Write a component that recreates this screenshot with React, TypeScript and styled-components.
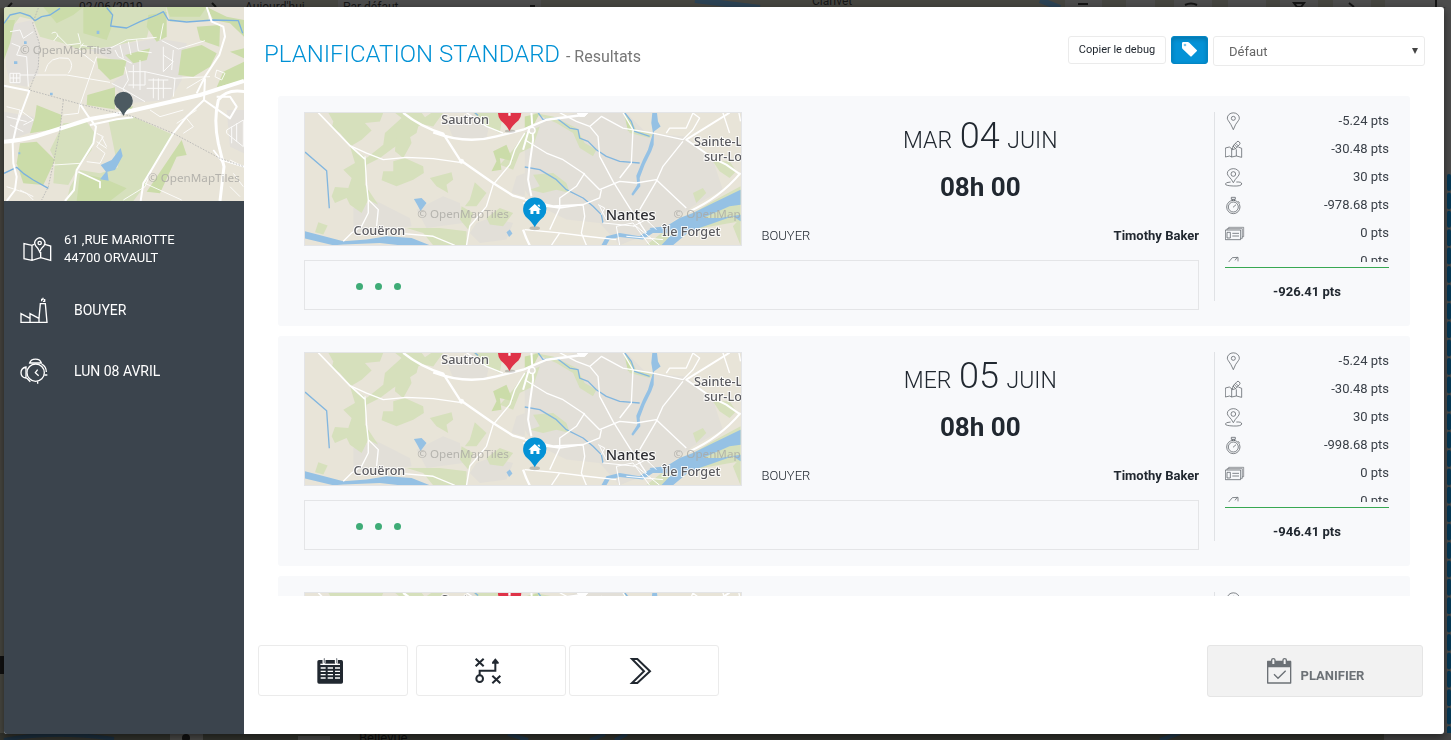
import React from "react";
import styled, { createGlobalStyle, css } from "styled-components";

const GlobalStyle = createGlobalStyle`
  * { box-sizing: border-box; }
  body {
    margin: 0;
    background: #4b4b49;
    color: #212830;
    font-family: Roboto, "Liberation Sans", sans-serif;
    font-size: 13px;
    line-height: 18px;
  }
  button, select { font-family: inherit; }
`;

/* ---------- page behind the dialog ---------- */

const Behind = styled.div`
  position: fixed;
  inset: 0;
  overflow: hidden;
  background: #3f403b;
  color: #141414;
`;

const BehindMap = styled.svg`
  display: block;
  width: 100%;
  height: 100%;
`;

const Page = styled.div`
  position: relative;
  min-height: 100vh;
  display: flex;
  padding: 7px 7px 6px 4px;
`;

const Dialog = styled.section`
  flex: 1;
  min-width: 0;
  display: flex;
  background: #fff;
  border-radius: 3px;
  box-shadow: 0 3px 10px rgba(0, 0, 0, 0.5);
  overflow: hidden;
`;

/* ---------- sidebar ---------- */

const Sidebar = styled.aside`
  flex: 0 0 240px;
  background: #3b444d;
  color: #fff;
`;

const SideMap = styled.svg`
  display: block;
  width: 100%;
  height: 194px;
`;

const InfoList = styled.ul`
  display: flex;
  flex-direction: column;
  gap: 1px;
  list-style: none;
  margin: 0;
  padding: 18px 16px 0;
`;

const InfoItem = styled.li<{ $wide?: boolean }>`
  display: flex;
  align-items: center;
  height: 60px;
  gap: ${(p) => (p.$wide ? 26 : 13)}px;
  padding-left: ${(p) => (p.$wide ? 0 : 3)}px;
  font-size: ${(p) => (p.$wide ? 14 : 13)}px;
`;

const InfoIcon = styled.svg`
  flex: none;
  width: 28px;
  height: 28px;
  overflow: visible;
  fill: none;
  stroke: #fff;
  stroke-width: 4;
`;

/* ---------- main panel ---------- */

const Main = styled.main`
  flex: 1;
  min-width: 0;
  display: flex;
  flex-direction: column;
`;

const Header = styled.header`
  display: flex;
  justify-content: space-between;
  align-items: flex-start;
  height: 89px;
  padding: 29px 19px 0 20px;
`;

const Title = styled.h1`
  margin: 0;
  font-size: 24px;
  line-height: 36px;
  font-weight: 300;
  color: #0091d5;
`;

const Subtitle = styled.small`
  font-size: 16px;
  font-weight: 400;
  color: #777;
`;

const Tools = styled.div`
  display: flex;
  align-items: flex-start;
  gap: 5px;
`;

const ToolButton = styled.button<{ $active?: boolean }>`
  display: flex;
  align-items: center;
  justify-content: center;
  height: 28px;
  width: ${(p) => (p.$active ? 37 : 98)}px;
  padding: 0 0 2px;
  border: 1px solid #ebebeb;
  border-radius: 3px;
  background: #fff;
  color: #212830;
  font-size: 11px;
  ${(p) =>
    p.$active &&
    css`
      border-color: #0486c4;
      background: #0492d6;
      color: #fff;
      box-shadow: inset 0 2px 4px rgba(0, 0, 0, 0.2);
    `}
`;

const SelectWrap = styled.div`
  display: grid;
  align-items: center;
  width: 212px;
  > * { grid-area: 1 / 1; }
`;

const Select = styled.select`
  appearance: none;
  width: 100%;
  height: 30px;
  padding: 0 15px;
  border: 1px solid #ebebeb;
  border-radius: 3px;
  background: #fff;
  color: #666;
  font-size: 13px;
`;

const SelectArrow = styled.svg`
  justify-self: end;
  width: 6px;
  height: 6px;
  margin-right: 7px;
  pointer-events: none;
  fill: #444;
`;

const Results = styled.div`
  display: flex;
  flex-direction: column;
  gap: 10px;
  height: calc(100vh - 240px);
  margin: 0 34px;
  overflow: hidden;
`;

const Card = styled.article`
  flex: none;
  display: flex;
  height: 230px;
  padding: 16px 21px 16px 26px;
  border-radius: 3px;
  background: #f8f9fb;
`;

const CardBody = styled.div`
  flex: 1;
  min-width: 0;
  margin-right: 15px;
`;

const CardTop = styled.div`
  display: flex;
  height: 134px;
  margin-bottom: 14px;
`;

const CardMap = styled.svg`
  flex: none;
  width: calc(49% - 1px);
  height: 134px;
  border: 1px solid #e4e5e7;
`;

const Slot = styled.div`
  flex: 1;
  display: flex;
  flex-direction: column;
  padding-left: 20px;
  text-align: center;
`;

const SlotDate = styled.div`
  height: 48px;
  line-height: 48px;
  font-size: 23px;
  font-weight: 300;
`;

const SlotDay = styled.span`
  margin: 0 2px;
  font-size: 36px;
`;

const SlotTime = styled.div`
  margin-top: 10px;
  font-size: 26px;
  line-height: 34px;
  font-weight: 700;
`;

const SlotPeople = styled.div`
  display: flex;
  justify-content: space-between;
  margin-top: auto;
  padding-bottom: 1px;
  font-weight: 300;
`;

const Technician = styled.strong`
  font-weight: 700;
`;

const Steps = styled.div`
  display: flex;
  align-items: center;
  gap: 12px;
  height: 50px;
  padding: 2px 0 0 51px;
  border: 1px solid #e4e5e7;
`;

const Dot = styled.span`
  width: 7px;
  height: 7px;
  border-radius: 50%;
  background: #3fac77;
`;

const Scores = styled.div`
  flex: 0 0 175px;
  height: 189px;
  padding-left: 10px;
  border-left: 1px solid #e0e2e5;
`;

const ScoreList = styled.ul`
  list-style: none;
  height: 150px;
  margin: 0 0 5px;
  padding: 0;
  overflow: hidden;
`;

const ScoreRow = styled.li`
  display: flex;
  justify-content: space-between;
  height: 28px;
  color: #3a4048;
`;

const ScoreIcon = styled.svg`
  width: 20px;
  height: 20px;
  fill: none;
  stroke: #555a60;
  stroke-width: 2.2;
`;

const Total = styled.div`
  padding-top: 15px;
  border-top: 1px solid #38a852;
  text-align: center;
  font-weight: 700;
`;

/* ---------- footer ---------- */

const Footer = styled.footer`
  display: flex;
  align-items: flex-start;
  margin-top: auto;
  padding: 0 21px 37px 14px;
`;

const ActionButton = styled.button<{ $gap: number }>`
  display: flex;
  align-items: center;
  justify-content: center;
  width: 150px;
  height: 51px;
  margin-right: ${(p) => p.$gap}px;
  padding: 0 6px 0 0;
  border: 1px solid #ebebeb;
  border-radius: 3px;
  background: #fff;
`;

const ActionIcon = styled.svg`
  width: 26px;
  height: 26px;
  overflow: visible;
  fill: none;
  stroke: #212830;
`;

const PlanButton = styled.button`
  display: flex;
  align-items: flex-end;
  justify-content: center;
  gap: 9px;
  width: 216px;
  height: 52px;
  margin-left: auto;
  padding: 0 0 11px;
  border: 1px solid #e5e5e5;
  border-radius: 3px;
  background: #f2f2f2;
  color: #6c7176;
  font-size: 13px;
  font-weight: 700;
  line-height: 18px;
`;

const PlanIcon = styled.svg`
  width: 26px;
  height: 26px;
  margin-bottom: 1px;
  fill: none;
  stroke: #6c7176;
  stroke-width: 4;
`;

/* ---------- drawings ---------- */

const BackgroundScene = () => (
  <BehindMap viewBox="0 0 1451 740" preserveAspectRatio="none" aria-hidden="true">
    <rect width="1451" height="8" fill="#464641" />
    <rect width="292" height="8" fill="#4c4c4c" />
    <rect x="338" width="203" height="8" fill="#4c4c4c" />
    <path d="M695 0 L760 8 M1040 0 L1060 8" stroke="#2c4355" strokeWidth="6" />
    <g fill="#4d4d4d">
      <path d="M1065 0h37v8h-37zM1126 0h29v8h-29zM1174 0h38v8h-38zM1228 0h38v8h-38zM1280 0h38v8h-38zM1333 0h38v8h-38zM1385 0h66v8h-66z" />
    </g>
    <path d="M12 3l-4 4M212 3l4 4M1078 4h10M1185 5q6-3 12 0M1294 3h10l-3 4h-4zM1349 3l5 4M1436 0v7M1444 8q6 4 7 14" fill="none" stroke="#151515" strokeWidth="2" />
    <rect x="530" y="5" width="5" height="2" fill="#151515" />
    <g fontSize="12" fill="#171717">
      <text x="79" y="11">02/06/2019</text>
      <text x="245" y="11">Aujourd'hui</text>
      <text x="343" y="11">Par défaut</text>
      <text x="812" y="5">Clarivet</text>
    </g>
    <rect y="8" width="5" height="732" fill="#484841" />
    <rect y="200" width="5" height="270" fill="#46443f" />
    <rect y="656" width="5" height="18" fill="#111" />
    <rect x="1443" y="8" width="8" height="732" fill="#4c4c4c" />
    {Array.from({ length: 31 }, (_, i) => (
      <rect key={i} x="1447" y={174 + i * 18.4} width="4" height="17" rx="2" fill="#063a58" />
    ))}
    <rect y="733" width="1384" height="7" fill="#32332d" />
    <rect x="1384" y="733" width="67" height="7" fill="#444" />
    <path d="M4 740q50-10 110-1" fill="none" stroke="#1c3040" strokeWidth="4" />
    <path d="M170 733h33v7h-33zM298 736h32v4h-32z" fill="#4a4a48" />
    <circle cx="186" cy="738" r="4" fill="#111" />
    <path d="M508 734l20 6M615 740l12-6M1160 740l20-7M590 740l15-6" stroke="#22384a" strokeWidth="4" />
    <text x="359" y="742" fontSize="13" fill="#0d0d0d">Bellevue</text>
  </BehindMap>
);

const OrvaultMap = () => (
  <SideMap viewBox="12 21 720 582" preserveAspectRatio="xMidYMid slice" role="img" aria-label="Orvault">
    <rect x="12" y="21" width="720" height="582" fill="#e8e4d8" />
    <g fill="#e2dfda">
      <path d="M30 75L95 60 120 130 115 220 80 260 30 250 18 200 20 120Z" />
      <path d="M270 150L470 115 560 130 545 240 510 300 380 310 335 250 385 215 340 180Z" />
      <path d="M12 335L100 350 110 390 30 420 12 420Z" />
      <path d="M680 330L732 330 732 460 690 440Z" />
    </g>
    <g fill="#d6e0bd">
      <path d="M12 21H500L495 55 450 75 440 115 330 140 240 150 190 130 120 110 100 60 60 50 30 90 12 160Z" />
      <path d="M325 360L400 350 520 405 430 550 360 530 345 460Z" />
      <path d="M190 370L260 365 285 400 275 450 230 510 205 555 160 550 165 480 150 450Z" />
      <path d="M210 560L240 510 300 520 360 500 440 550 400 603H200Z" />
      <path d="M500 21H625V60L510 65Z" />
    </g>
    <g fill="#cbdca9">
      <path d="M250 21H335V80L320 120 250 100Z" />
      <path d="M12 60L45 60 30 130 12 180Z" />
      <path d="M130 21L250 21 220 45 170 70Z" />
      <path d="M445 45L500 35 500 110 470 125 440 80Z" />
      <path d="M500 21H620L600 50H510Z" />
      <path d="M590 80L660 75 658 140 600 120Z" />
      <path d="M545 150L605 135 650 160 630 200 580 230 535 225Z" />
      <path d="M290 175L380 180 370 225 330 240 295 205Z" />
      <path d="M262 285L345 262 345 330 400 318 390 335 260 315Z" />
      <path d="M375 165L450 145 440 180 400 190Z" />
      <path d="M110 315L185 345 180 385 90 400 105 350Z" />
      <path d="M60 430L110 425 165 480 130 555 70 550 50 490Z" />
      <path d="M440 575L545 420 560 465 530 470 480 580Z" />
      <path d="M240 520L310 535 380 565 330 603H230Z" />
      <path d="M620 21L680 50 732 60V110L690 70 640 60Z" />
      <path d="M670 215L732 185V240L650 262Z" />
      <path d="M690 155L732 145V175Z" />
    </g>
    <g fill="none" stroke="#7ab1df" strokeWidth="4" strokeLinejoin="round">
      <path d="M12 70L30 45 60 38 90 48 105 62 125 50 150 45 180 25M320 23L338 45 332 78 380 84 420 65 470 45 490 35 505 60 560 66 640 60 715 62 728 100" />
      <path d="M12 520L50 502 70 520 100 540 145 565" />
    </g>
    <g fill="#93c0e4">
      <path d="M362 444L368 468 345 510 322 515 326 542 300 538 318 515 302 495 335 480Z" />
      <path d="M290 92h8v10h-8zM72 124h8v8h-8zM42 184h10v8h-10zM150 278h8v8h-8zM55 457h6v6h-6z" />
    </g>
    <g fill="none" stroke="#fff" strokeWidth="3" opacity=".85">
      <path d="M30 95l30-5 10 25 30-20M35 130l25 10-10 25 30 5 5 90M30 220h30v28h-30zM40 220v28M50 220v28M30 234h30" />
      <path d="M155 100q15-10 18 8l-12 15M172 105l30 30 40-5-8-30M240 135l60 10M250 130l-15 20 50 40M290 170l-50 145M60 225l140 0 130 22" />
      <path d="M135 215q10-50 70-40 20 20 0 45M330 145l50-25 90-8M345 150l10 20 40 20M360 135l10 40M385 125l8 40M410 118l5 35 40 5M480 120l10-50M485 122l50 25 80-25M490 140v75l30-30-30-20M520 150l-5 60" />
      <path d="M375 200l10 40-15 25 10 40M385 215h50v40h-50M400 195v70M420 180v90M435 215l90 20-5 55M445 240h60M440 265h75M460 235v60M475 235v65M490 240v55M335 250l40 20 60 35M520 235l110-5" />
      <path d="M20 320l40 10-10 40M20 350l60 15M60 330l40 30-30 15M30 375l40 20M190 345l45-5 5-30M160 495l80-5M290 400l20 10-20 30 25 20-15 30-40-5M320 445l-30-20M305 410l15 30" />
      <path d="M370 600l65-40 20-50M435 550l110 50M450 330l30 20 70-20M530 370l60-40M560 355l20 25-30 20M650 210l25 10-10 20-20-10zM560 265l50-30M20 560l60 20 20 20M60 570l40 20M680 390l50-30v80l-50-40zM695 380v50M710 370v55M690 480l40 20M700 520l30 40M690 560l30 30" />
    </g>
    <g fill="none" stroke="#fff" strokeLinejoin="round">
      <path d="M12 425Q60 422 110 408L270 357 340 345 600 285 732 243" strokeWidth="12" />
      <path d="M240 312L262 345 288 380 280 430 230 510 222 570 195 603M270 375L350 358 400 352M88 273L50 375 38 430 40 490 50 530 45 570 20 603M12 257L90 273M620 21L635 65 670 80 675 110 658 165 615 230 590 280M615 235L612 300 560 350 520 400 460 500 430 550 422 603M612 300L690 355 710 320 690 290 650 290" strokeWidth="6" />
      <path d="M735 275Q680 265 655 300 640 360 655 430L672 500 660 603" strokeWidth="9" />
      <path d="M665 480L732 500M670 490L640 450M300 565V545L235 515" strokeWidth="5" />
    </g>
    <g fill="none" stroke="#b5b5b3" strokeWidth="2.5" strokeDasharray="5 4">
      <path d="M115 24L98 70 118 130 115 200 88 270 250 315 400 350 520 400 660 475 732 500M190 300L180 390 160 490 145 560 125 600" />
    </g>
    <g fontFamily="'Noto Sans', sans-serif" fontSize="35" fill="#aaa9a4" fillOpacity=".85">
      <text x="60" y="161">© OpenMapTiles</text>
      <text x="444" y="545">© OpenMapTiles</text>
    </g>
    <path d="M370 348Q362 330 350 322A28 28 0 1 1 391 322Q378 330 370 348Z" fill="#4c5a61" />
  </SideMap>
);

const NantesMap = () => (
  <CardMap viewBox="15 69 1308 398" preserveAspectRatio="xMidYMid slice" role="img" aria-label="Nantes">
    <rect x="0" y="60" width="1340" height="420" fill="#e8e4d8" />
    <g fill="#e2dfd8">
      <path d="M675 130L720 100 830 69 980 69 1040 130 1160 140 1240 210 1270 300 1180 350 1100 410 960 467 900 400 800 390 700 340 675 300Z" />
      <path d="M160 355L230 335 330 385 335 410 160 430Z" />
      <path d="M440 95L520 69 570 100 560 145 460 145Z" />
      <path d="M350 360L430 320 480 340 490 400 380 415Z" />
      <path d="M530 400L570 385 640 400 620 450 540 460 510 430ZM650 260L675 250V320L635 310Z" />
    </g>
    <g fill="#d6e0bc">
      <path d="M85 69H250L240 95 195 100 215 122 185 150 152 170 120 130 95 115 100 95Z" />
      <path d="M150 170L200 205 250 165 255 130 305 85 285 69H365L385 95 355 110 350 130 280 175 240 205 200 225 195 285 235 345 205 330 185 370 150 345 140 325 105 340 95 320 105 292 145 295 155 265 130 240 165 220Z" />
      <path d="M280 215L315 205 370 230 372 250 340 270 290 290 245 272 250 245 280 245Z" />
      <path d="M395 69H430L400 110 350 100ZM290 130L325 120 335 160 310 205 285 185Z" />
      <path d="M390 265L455 248 460 270 440 285 445 310 410 290ZM525 278L560 310 530 350 495 350 510 330ZM485 350L520 370 505 420 480 390Z" />
      <path d="M55 398L83 408 70 435 45 428ZM320 415L420 415 500 425 500 467H400L370 430ZM520 69H610L600 130 560 110Z" />
      <path d="M640 180L675 130 720 110 700 170 660 190 640 240 600 225ZM560 385L600 355 640 370 610 410 570 405Z" />
      <path d="M690 300L720 290 700 255 760 250 800 280 810 310 770 300 730 310ZM700 69L760 80 830 115 855 160 890 180 880 200 840 175 820 130 770 100Z" />
      <path d="M970 69L990 85 1010 120 1060 135 1050 145 990 130ZM1180 310L1210 295 1220 310 1190 340ZM1230 340L1323 290V395L1180 420 1120 440 1100 467H1040L1080 435Z" />
      <path d="M1240 215L1290 215 1310 245 1290 265 1260 245ZM1323 385L1300 410 1323 467Z" />
    </g>
    <g fill="#cbdca9">
      <path d="M580 185L620 165 640 215 600 205 605 240 575 245 590 215ZM675 80L720 70 705 100 675 115ZM975 75L1000 105 985 125Z" />
    </g>
    <g fill="#95c1e4">
      <path d="M15 425L130 455 200 450 260 440 335 445 390 467H300L240 460 130 465 100 467 15 447Z" />
      <path d="M342 328L365 325 380 340 362 364 352 345ZM620 428L630 420 638 432 628 442Z" />
      <path d="M1323 300L1230 345 1180 370 1140 385 1100 410 1050 415 1060 430 1120 430 1085 467H1120L1170 425 1230 405 1300 380 1323 395V375L1260 385 1210 385 1290 350 1323 345Z" />
      <path d="M1058 69H1072L1075 95 1083 110 1063 125 1062 165 1055 185 1035 225 1020 265 1022 290 1000 318 995 314 1013 285 1010 258 1030 210 1045 180 1060 130 1055 100Z" />
      <path d="M905 467L920 440 960 430 1020 440 1050 420 1110 410 1100 425 1060 430 1030 450 960 442 930 450 920 467Z" />
    </g>
    <g fill="none" stroke="#82b6df" strokeWidth="4" strokeLinejoin="round">
      <path d="M15 187L80 243 88 356M525 69l10 8M715 69L730 90 770 85 810 115 835 120 840 145 865 155 890 180 920 200 960 215 1020 220M975 69L995 95 1005 125 1050 140M675 232L720 240 770 270 800 300 850 325 880 350 905 375 910 400" />
    </g>
    <g fill="none" stroke="#fff" strokeWidth="4" strokeLinejoin="round">
      <path d="M150 168L200 190 250 210 320 203 400 207 480 218M195 200L200 285 205 330 235 360 230 410M205 330L205 370 185 410 155 430 130 455M310 432L400 440 465 467M500 467L510 410 560 350 580 285 630 225 645 180 675 130M500 69L560 110 610 130" />
      <path d="M780 69L830 95 870 110 905 80 970 115 1060 130 1150 150M870 110L895 140 900 200 940 275 990 355 1040 430M675 150L740 190 790 210 850 250 900 300 960 275 1010 280 1070 270 1160 355M970 69L1000 120 995 220 960 265M1150 155L1090 230 1070 275 1020 360M1100 130L1110 115 1160 115 1180 70 1200 85 1180 120 1150 150" />
      <path d="M780 355L850 345 900 325 905 300M855 250L830 290 780 325 780 355 750 420M850 345L855 380 845 430 860 467M670 340L780 355M675 420L780 430 860 440 950 450M780 430L755 467M1290 130L1270 69M1323 95L1318 69" />
      <path d="M910 400L1010 410 1080 467M960 467L950 410 1000 400 1050 467M1000 410L1040 390 1070 420M980 440L1090 450M1010 360L1050 400M900 350L920 390M895 345l20 10-10 20" strokeWidth="3" />
    </g>
    <g fill="none" stroke="#fff" strokeLinejoin="round">
      <path d="M55 69L150 168 195 208" strokeWidth="5" />
      <path d="M310 69Q360 110 430 132L480 210 580 280 640 318 675 328M400 128Q500 165 590 140L670 120 740 90 855 75" strokeWidth="7" />
      <path d="M695 69L700 150 690 220 685 270 695 320M675 330L760 350 850 345M690 110L670 180M1323 255L1280 225 1240 205 1160 150 1290 69M1323 250Q1260 325 1170 365" strokeWidth="6" />
      <path d="M832 69H865L855 80H840Z" fill="#fff" strokeWidth="3" />
      <circle cx="485" cy="215" r="7" fill="#fff" />
      <circle cx="697" cy="122" r="9" fill="#e2dfd8" strokeWidth="4" />
      <path d="M670 420Q680 450 690 467" strokeWidth="7" />
    </g>
    <g fontFamily="'Noto Sans', sans-serif" fontWeight="500" paintOrder="stroke" stroke="#fff" strokeOpacity=".85" strokeWidth="6" fill="#5c5c60">
      <g fontSize="38">
        <text x="424" y="102">Sautron</text>
        <text x="161" y="435">Couëron</text>
        <text x="1183" y="168">Sainte-L</text>
        <text x="1213" y="215">sur-Lo</text>
        <text x="1088" y="440">Île Forget</text>
      </g>
      <text x="918" y="392" fontSize="44" fill="#2e2e32">Nantes</text>
    </g>
    <g fontFamily="'Noto Sans', sans-serif" fontSize="35" fill="#aaa9a4" fillOpacity=".8">
      <text x="352" y="384">© OpenMapTiles</text>
      <text x="1122" y="384">© OpenMap</text>
    </g>
    <ellipse cx="705" cy="416" rx="16" ry="6" fill="#000" opacity=".18" />
    <ellipse cx="631" cy="124" rx="16" ry="5" fill="#000" opacity=".18" />
    <path d="M629 124Q622 108 603 92A35 35 0 1 1 656 92Q636 108 629 124Z" fill="#df3348" />
    <path d="M629 50V78" stroke="#fff" strokeWidth="7" />
    <path d="M705 413Q698 398 678 381A35 35 0 1 1 732 381Q712 398 705 413Z" fill="#0492d6" />
    <path d="M705 343l19 17h-5v13h-9v-9h-9v9h-9v-13h-6zM714 345h6v8l-6-5z" fill="#fff" />
  </CardMap>
);

const scoreIcons: React.ReactNode[] = [
  <g key="pin">
    <path d="M85 119Q78 102 70 92Q67 88 67 84.500A18 16 0 0 1 103 84.500Q103 88 100 92Q91 102 85 119Z" />
    <circle cx="85" cy="85" r="6" />
  </g>,
  <g key="draw" transform="translate(0 -84)">
    <path d="M80 176L73 171 61 174V201L74 198 80 201V175M80 201L94 198 110 202V175L100 171M94 178V198" />
    <path d="M82 179L84 168 96 155Q99 152 103 156T104 163L92 176ZM84 168L92 176M88 164L96 172M92 160L100 168" />
  </g>,
  <g key="place" transform="translate(0 -168)">
    <path d="M85 278Q80 268 72 260Q67 255 67 250A18 14 0 0 1 103 250Q103 255 98 260Q90 268 85 278Z" />
    <circle cx="85" cy="252" r="7" />
    <path d="M77 276Q61 277 61 282T85 288 110 282 94 276" />
  </g>,
  <g key="watch" transform="translate(0 -252)">
    <circle cx="85" cy="351" r="20" />
    <circle cx="85" cy="351" r="15" />
    <path d="M79 322H91V328H79ZM82 328V333M88 328V333M84 352L93 344M100 334L104 338" />
  </g>,
  <g key="cards" transform="translate(0 -336)">
    <path d="M61 420H107V449H61ZM66 427H76V444H66ZM82 430H102M82 438H102" />
    <path d="M66 420V416H112V445H107M71 416V412H116V440H112" strokeWidth="1.8" />
  </g>,
  <g key="route" transform="translate(0 -420)">
    <path d="M71 516L82 503 99 502V514M90 511L96 503" />
  </g>,
];

const ScoreGlyph = ({ index }: { index: number }) => (
  <ScoreIcon viewBox="60 66 60 60" aria-hidden="true">{scoreIcons[index]}</ScoreIcon>
);

type Result = { weekday: string; day: string; scores: string[]; total: string };

const results: Result[] = [
  {
    weekday: "MAR",
    day: "04",
    scores: ["-5.24", "-30.48", "30", "-978.68", "0", "0"],
    total: "-926.41",
  },
  {
    weekday: "MER",
    day: "05",
    scores: ["-5.24", "-30.48", "30", "-998.68", "0", "0"],
    total: "-946.41",
  },
  {
    weekday: "JEU",
    day: "06",
    scores: ["-5.24", "-30.48", "30", "-998.68", "0", "0"],
    total: "-946.41",
  },
];

const ResultCard = ({ result }: { result: Result }) => (
  <Card>
    <CardBody>
      <CardTop>
        <NantesMap />
        <Slot>
          <SlotDate>
            {result.weekday} <SlotDay>{result.day}</SlotDay> JUIN
          </SlotDate>
          <SlotTime>08h 00</SlotTime>
          <SlotPeople>
            <span>BOUYER</span>
            <Technician>Timothy Baker</Technician>
          </SlotPeople>
        </Slot>
      </CardTop>
      <Steps>
        <Dot />
        <Dot />
        <Dot />
      </Steps>
    </CardBody>
    <Scores>
      <ScoreList>
        {result.scores.map((score, i) => (
          <ScoreRow key={i}>
            <ScoreGlyph index={i} />
            <span>{score} pts</span>
          </ScoreRow>
        ))}
      </ScoreList>
      <Total>{result.total} pts</Total>
    </Scores>
  </Card>
);

export default function App() {
  return (
    <>
      <GlobalStyle />
      <Behind>
        <BackgroundScene />
      </Behind>
      <Page>
        <Dialog role="dialog" aria-label="Planification standard">
          <Sidebar>
            <OrvaultMap />
            <InfoList>
              <InfoItem>
                <InfoIcon viewBox="68 105 84 84" aria-hidden="true">
                  <path d="M101 133L95 136 71 131V176L95 181 121 173 151 181V138L133 133M95 138V180M121 156V173" />
                  <path d="M118 155Q114 145 106 137A15 15 0 1 1 131 137Q122 145 118 155Z" />
                  <circle cx="118" cy="129" r="5" />
                </InfoIcon>
                <span>
                  61 ,RUE MARIOTTE
                  <br />
                  44700 ORVAULT
                </span>
              </InfoItem>
              <InfoItem $wide>
                <InfoIcon viewBox="60 288 84 84" aria-hidden="true">
                  <path d="M63 367V341L90 355V341L117 355 121 311H136L141 367ZM90 355V367M117 355V367" />
                  <path d="M125 304V298H129V293M129 304H134V297" />
                </InfoIcon>
                <span>BOUYER</span>
              </InfoItem>
              <InfoItem $wide>
                <InfoIcon viewBox="60 469 84 84" aria-hidden="true">
                  <circle cx="107" cy="516" r="26" />
                  <path d="M89 487A18 15 0 0 1 124 487ZM78 499Q63 502 63 516T78 532ZM125 490Q139 498 139 514M133 523H142M113 507L106 516 116 525M113 542V549M80 532L91 543" />
                </InfoIcon>
                <span>LUN 08 AVRIL</span>
              </InfoItem>
            </InfoList>
          </Sidebar>
          <Main>
            <Header>
              <Title>
                PLANIFICATION STANDARD <Subtitle>- Resultats</Subtitle>
              </Title>
              <Tools>
                <ToolButton type="button">Copier le debug</ToolButton>
                <ToolButton type="button" $active aria-label="Étiquettes">
                  <svg width="15" height="15" viewBox="425 126 45 45" aria-hidden="true">
                    <path d="M429 126H442Q445 126 447 128L469 150Q471 152 469 154L454 169Q452 171 450 169L427 147Q425 145 425 142V130Q425 126 429 126Z" fill="#fff" />
                    <circle cx="434" cy="135" r="4" fill="#7cc5ea" />
                  </svg>
                </ToolButton>
                <SelectWrap>
                  <Select aria-label="Profil" defaultValue="defaut">
                    <option value="defaut">Défaut</option>
                  </Select>
                  <SelectArrow viewBox="0 0 6 6" aria-hidden="true">
                    <path d="M0 0H6L3 6Z" />
                  </SelectArrow>
                </SelectWrap>
              </Tools>
            </Header>
            <Results>
              {results.map((r) => (
                <ResultCard key={r.day} result={r} />
              ))}
            </Results>
            <Footer>
              <ActionButton type="button" $gap={8} aria-label="Calendrier">
                <ActionIcon viewBox="203 294 78 78" aria-hidden="true">
                  <path d="M209 300H276Q281 300 281 305V366Q281 371 276 371H209Q204 371 204 366V305Q204 300 209 300Z" fill="#212830" stroke="none" />
                  <path d="M213 313H272" stroke="#fff" strokeWidth="4" />
                  <path d="M224 294V308M261 294V308" stroke="#fff" strokeWidth="9" strokeLinecap="round" />
                  <path d="M225 296V308M262 296V308" stroke="#8b9096" strokeWidth="4" strokeLinecap="round" />
                  <path d="M214 324H229M235 324H251M257 324H272M214 334H229M235 334H251M257 334H272M214 344H229M235 344H251M257 344H272M214 354H229M235 354H251M257 354H272" stroke="#fff" strokeWidth="4" />
                </ActionIcon>
              </ActionButton>
              <ActionButton type="button" $gap={3} aria-label="Itinéraire">
                <ActionIcon viewBox="676 294 78 78" strokeWidth="6" aria-hidden="true">
                  <path d="M678 296L702 319M702 296L678 319M728 347L752 370M752 347L728 370M690 345V332H737V300" />
                  <circle cx="690" cy="356" r="10" />
                  <path d="M727 307L737 295 747 307V311H727Z" fill="#212830" stroke="none" />
                </ActionIcon>
              </ActionButton>
              <ActionButton type="button" $gap={0} aria-label="Suivant">
                <ActionIcon viewBox="1135 294 78 78" strokeWidth="6" aria-hidden="true">
                  <path d="M1147 297H1163L1201 334 1163 369H1147L1183 334Z" />
                </ActionIcon>
              </ActionButton>
              <PlanButton type="button">
                <PlanIcon viewBox="256 294 78 78" aria-hidden="true">
                  <path d="M262 304H329V320H262Z" fill="#6c7176" />
                  <path d="M261 305H330V369H261Z" strokeLinejoin="round" />
                  <path d="M273 314V300Q273 296 278 296T283 300V314ZM307 314V300Q307 296 312 296T317 300V314Z" fill="#f2f2f2" />
                  <path d="M280 343L292 355 315 332" />
                </PlanIcon>
                <span>PLANIFIER</span>
              </PlanButton>
            </Footer>
          </Main>
        </Dialog>
      </Page>
    </>
  );
}
